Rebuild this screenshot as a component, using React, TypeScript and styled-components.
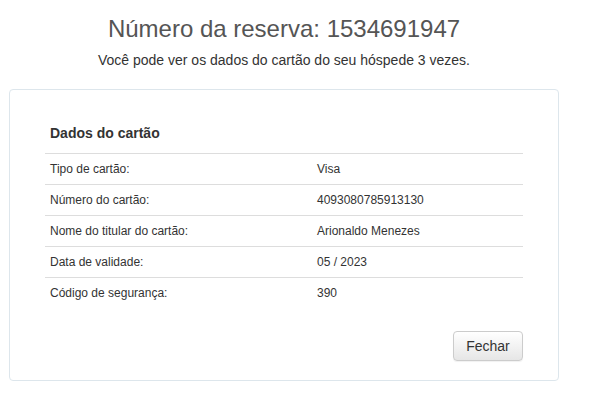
import React from "react";
import styled, { createGlobalStyle } from "styled-components";

const Global = createGlobalStyle`
  html, body { margin: 0; padding: 0; background: #fff; }
  body { font-family: "Liberation Sans", Arial, sans-serif; color: #333; }
`;

const Page = styled.div`
  width: 550px;
  margin-left: 9px;
  padding-top: 16px;
  display: flex;
  flex-direction: column;
`;

const Title = styled.h1`
  margin: 0;
  font-size: 24px;
  line-height: 26px;
  font-weight: normal;
  color: #555;
  text-align: center;
`;

const Subtitle = styled.p`
  margin: 8px 0 0;
  font-size: 14px;
  line-height: 20px;
  color: #333;
  text-align: center;
`;

const Card = styled.section`
  margin-top: 19px;
  border: 1px solid #dde6ec;
  border-radius: 4px;
  padding: 33px 35px 19px;
  display: flex;
  flex-direction: column;
`;

const CardTitle = styled.h2`
  margin: 0 0 10px;
  padding-left: 5px;
  font-size: 14px;
  line-height: 20px;
  font-weight: bold;
  color: #333;
`;

const Table = styled.div`
  display: flex;
  flex-direction: column;
  border-top: 1px solid #dddddd;
`;

const Row = styled.div<{ $last?: boolean }>`
  display: grid;
  grid-template-columns: 267px 1fr;
  border-bottom: ${(p) => (p.$last ? "none" : "1px solid #dddddd")};
`;

const Cell = styled.div`
  padding: 6px 5px;
  font-size: 12px;
  line-height: 18px;
  color: #333;
`;

const Actions = styled.div`
  margin-top: 23px;
  display: flex;
  justify-content: flex-end;
`;

const Button = styled.button`
  height: 30px;
  width: 70px;
  padding: 0 12px;
  font-family: "Liberation Sans", Arial, sans-serif;
  font-size: 14px;
  color: #333;
  background: linear-gradient(to bottom, #ffffff 0%, #e6e6e6 100%);
  border: 1px solid #cccccc;
  border-radius: 4px;
  box-shadow: 0 1px 1px rgba(0, 0, 0, 0.06);
  cursor: pointer;
`;

const rows: [string, string][] = [
  ["Tipo de cartão:", "Visa"],
  ["Número do cartão:", "4093080785913130"],
  ["Nome do titular do cartão:", "Arionaldo Menezes"],
  ["Data de validade:", "05 / 2023"],
  ["Código de segurança:", "390"],
];

export default function App() {
  return (
    <>
      <Global />
      <Page>
        <Title>Número da reserva: 1534691947</Title>
        <Subtitle>Você pode ver os dados do cartão do seu hóspede 3 vezes.</Subtitle>
        <Card>
          <CardTitle>Dados do cartão</CardTitle>
          <Table>
            {rows.map(([label, value], i) => (
              <Row key={label} $last={i === rows.length - 1}>
                <Cell>{label}</Cell>
                <Cell>{value}</Cell>
              </Row>
            ))}
          </Table>
          <Actions>
            <Button>Fechar</Button>
          </Actions>
        </Card>
      </Page>
    </>
  );
}
